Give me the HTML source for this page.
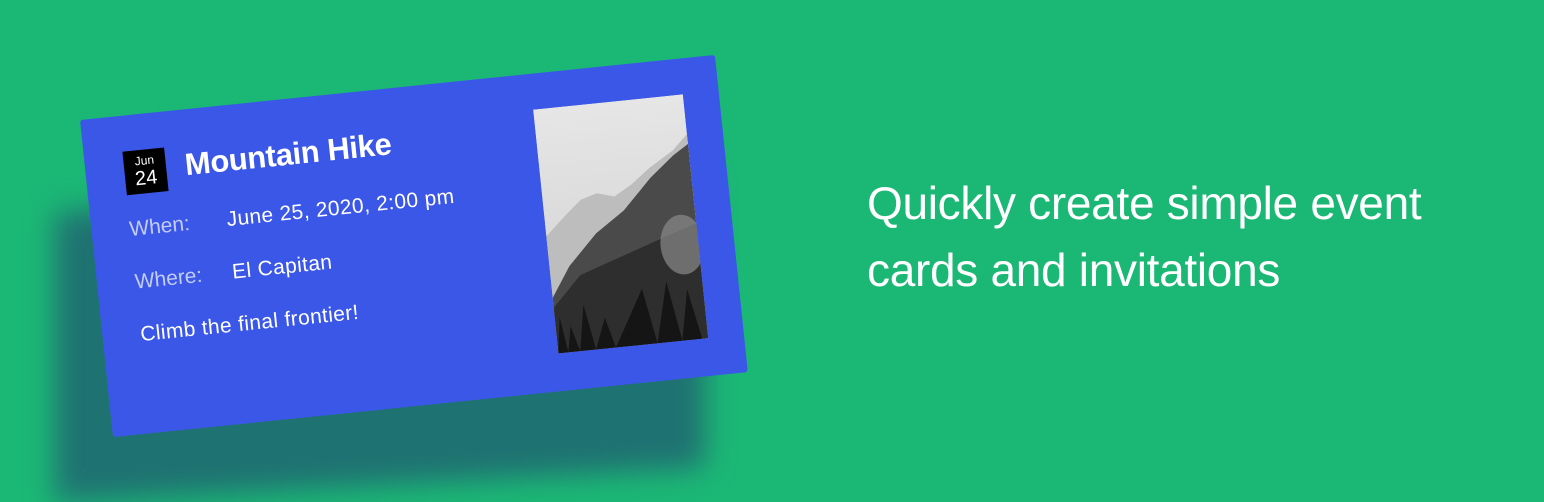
<!DOCTYPE html>
<html><head><style>
html,body{margin:0;padding:0}
body{width:1544px;height:500px;background:#1bb775;position:relative;overflow:hidden;font-family:"Liberation Sans",sans-serif}
.shadow{position:absolute;left:55px;top:195px;width:650px;height:290px;background:#1f7272;filter:blur(14px);transform:skewY(-3deg)}
.card{position:absolute;left:0;top:0;width:640px;height:320px;background:#3b57e8;border-radius:3px;transform-origin:0 0;transform:matrix(0.992,-0.1016,0.103,0.991,80,120)}
.date{position:absolute;left:39px;top:36px;width:42px;height:44px;background:#000;color:#fff;text-align:center}
.date .m{font-size:12px;line-height:14px;padding-top:4px}
.date .d{font-size:20px;line-height:22px}
.title{position:absolute;left:100px;top:38px;color:#fff;font-weight:bold;font-size:31px;letter-spacing:-0.3px}
.lab{position:absolute;color:#c4cdf7;font-size:21px}
.val{position:absolute;color:#fff;font-size:21px;letter-spacing:0.4px}
.img{position:absolute;left:453px;top:36px;width:151px;height:246px}
.right{position:absolute;left:867px;top:170px;color:#fff;font-size:46px;line-height:67px;letter-spacing:-0.3px}
</style></head><body>
<div class="shadow"></div>
<div class="card">
  <div class="date"><div class="m">Jun</div><div class="d">24</div></div>
  <div class="title">Mountain Hike</div>
  <div class="lab" style="left:38px;top:103px">When:</div>
  <div class="val" style="left:136px;top:103px">June 25, 2020, 2:00 pm</div>
  <div class="lab" style="left:38px;top:156px">Where:</div>
  <div class="val" style="left:136px;top:156px">El Capitan</div>
  <div class="val" style="left:38px;top:209px">Climb the final frontier!</div>
  <svg class="img" viewBox="0 0 151 246" preserveAspectRatio="none">
    <defs><linearGradient id="sky" x1="0" y1="0" x2="0" y2="1"><stop offset="0" stop-color="#e6e6e6"/><stop offset="1" stop-color="#cfcfcf"/></linearGradient></defs>
    <rect width="151" height="246" fill="url(#sky)"/>
    <polygon points="0,128 20,110 38,95 55,90 72,95 90,85 110,70 135,55 151,40 151,246 0,246" fill="#bdbdbd"/>
    <polygon points="20,160 50,130 80,110 110,80 135,60 151,50 151,246 0,246 0,190" fill="#4a4a4a"/>
    <polygon points="0,200 30,170 60,160 90,150 120,140 151,130 151,246 0,246" fill="#2e2e2e"/>
    <ellipse cx="135" cy="150" rx="22" ry="30" fill="#8a8a8a" opacity="0.7"/>
    <polygon points="0,246 5,210 10,246 15,220 22,246 30,200 38,246 50,215 58,246 90,190 100,246 115,185 125,246 135,195 145,246" fill="#151515"/>
  </svg>
</div>
<div class="right">Quickly create simple event<br>cards and invitations</div>
</body></html>
